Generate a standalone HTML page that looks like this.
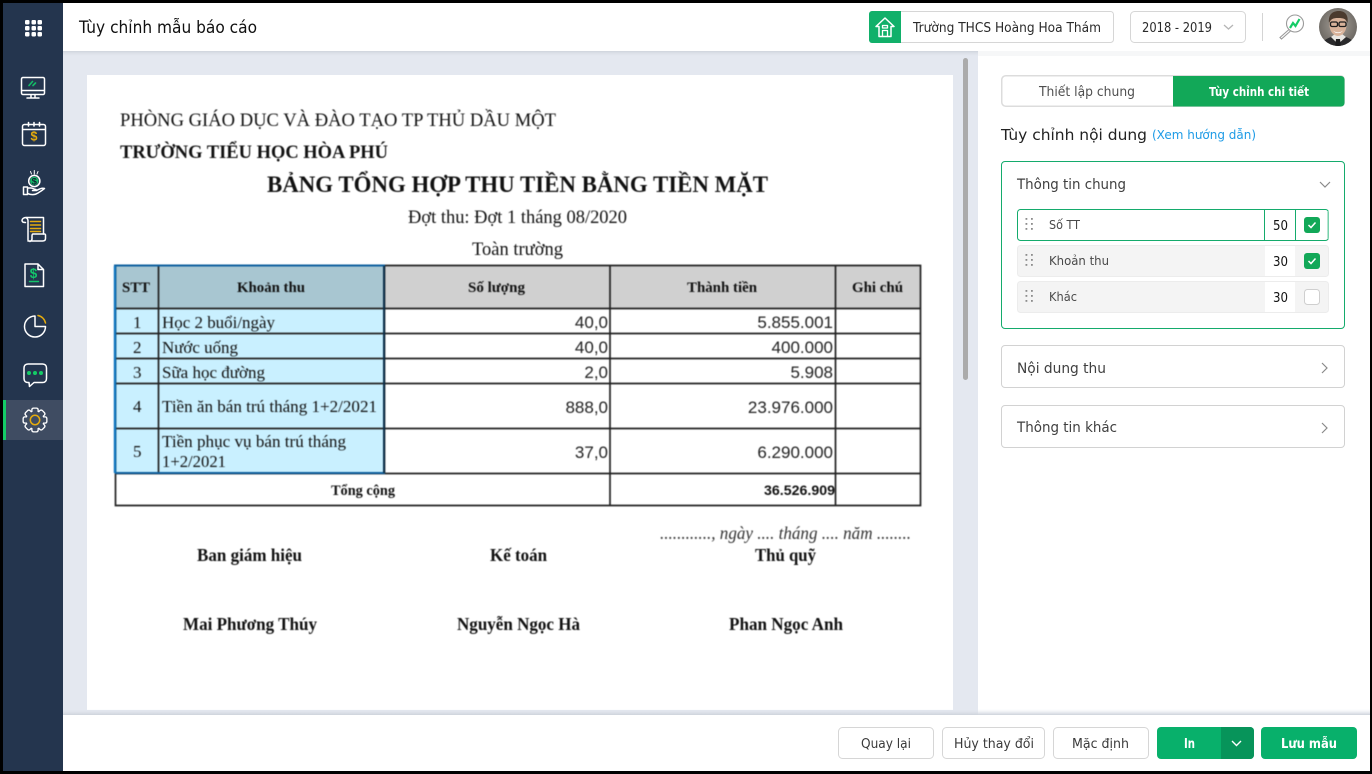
<!DOCTYPE html>
<html lang="vi"><head><meta charset="utf-8"><title>Tùy chỉnh mẫu báo cáo</title>
<style>
html,body{margin:0;padding:0;background:#000;width:1372px;height:774px;overflow:hidden}
svg{display:block}
text{white-space:pre}
.s{font-family:"DejaVu Sans","Liberation Sans",sans-serif}
.t{font-family:"Liberation Serif",serif;fill:#111}
.a{font-family:"Liberation Sans",sans-serif;fill:#222}
.b{font-weight:bold}
</style></head><body>
<svg width="1372" height="774" viewBox="0 0 1372 774" xmlns="http://www.w3.org/2000/svg">
<defs>
<linearGradient id="sh" x1="0" y1="0" x2="0" y2="1"><stop offset="0" stop-color="#cfd4dc"/><stop offset="1" stop-color="#e4e8f0" stop-opacity="0"/></linearGradient>
<linearGradient id="sf" x1="0" y1="1" x2="0" y2="0"><stop offset="0" stop-color="#cdd2da"/><stop offset="1" stop-color="#e4e8f0" stop-opacity="0"/></linearGradient>
<radialGradient id="av" cx=".5" cy=".45" r=".6"><stop offset="0" stop-color="#a8a29a"/><stop offset="1" stop-color="#66625d"/></radialGradient>
<clipPath id="ac"><circle cx="1338" cy="27" r="19"/></clipPath>
</defs>
<rect width="1372" height="774" fill="#000"/>
<rect x="63" y="51" width="915" height="664" fill="#e4e8f0"/>
<rect x="978" y="51" width="392" height="664" fill="#fff"/>
<rect x="63" y="3" width="1307" height="48" fill="#fff"/>
<rect x="63" y="51" width="915" height="6" fill="url(#sh)"/>
<rect x="978" y="51" width="392" height="5" fill="#f2f3f5" opacity=".7"/>
<rect x="87" y="75" width="866" height="635" fill="#fff"/>
<rect x="963" y="58" width="5" height="322" rx="2.5" fill="#ababab"/>

<!-- document -->
<g style="filter:blur(.45px)">
<text class="t" x="120" y="126" font-size="18.5" textLength="436" lengthAdjust="spacingAndGlyphs">PHÒNG GIÁO DỤC VÀ ĐÀO TẠO TP THỦ DẦU MỘT</text>
<text class="t b" x="120" y="158" font-size="18.5" textLength="268" lengthAdjust="spacingAndGlyphs">TRƯỜNG TIỂU HỌC HÒA PHÚ</text>
<text class="t b" x="267" y="192" font-size="23" textLength="501" lengthAdjust="spacingAndGlyphs">BẢNG TỔNG HỢP THU TIỀN BẰNG TIỀN MẶT</text>
<text class="t" x="408" y="223" font-size="18.5" textLength="219" lengthAdjust="spacingAndGlyphs">Đợt thu: Đợt 1 tháng 08/2020</text>
<text class="t" x="472" y="255" font-size="18.5" textLength="91" lengthAdjust="spacingAndGlyphs">Toàn trường</text>

<!-- table fills -->
<rect x="116" y="266" width="268" height="42" fill="#a8c6d1"/>
<rect x="384" y="266" width="536" height="42" fill="#d0d0d0"/>
<rect x="116" y="308" width="268" height="165" fill="#c9f0ff"/>
<g stroke="#222" stroke-width="1.7" fill="none">
<path d="M115.500 265.500H920.500V505.500H115.500Z"/>
<path d="M158.500 266V473M384.500 266V473M610 266V506M835.500 266V506"/>
<path d="M116 308.500H920M116 333.500H920M116 358.500H920M116 383.500H920M116 428.500H920M116 473.500H920" stroke-width="1.800"/>
</g>
<path d="M115 473V265.500H384V473H115" fill="none" stroke="#0d5f9e" stroke-width="2"/>
<path d="M384 266V473" stroke="#0b2f4a" stroke-width="2"/>
<path d="M115 266V473" stroke="#0d75c0" stroke-width="2.400"/>

<text class="t b" x="122" y="292" font-size="14.500" textLength="28" lengthAdjust="spacingAndGlyphs">STT</text>
<text class="t b" x="237" y="292" font-size="14.500" textLength="68" lengthAdjust="spacingAndGlyphs">Khoản thu</text>
<text class="t b" x="468" y="292" font-size="14.500" textLength="57" lengthAdjust="spacingAndGlyphs">Số lượng</text>
<text class="t b" x="687" y="292" font-size="14.500" textLength="70" lengthAdjust="spacingAndGlyphs">Thành tiền</text>
<text class="t b" x="852" y="292" font-size="14.500" textLength="51" lengthAdjust="spacingAndGlyphs">Ghi chú</text>
<text class="t" x="133" y="328" font-size="17">1</text>
<text class="t" x="133" y="353" font-size="17">2</text>
<text class="t" x="133" y="378" font-size="17">3</text>
<text class="t" x="133" y="412" font-size="17">4</text>
<text class="t" x="133" y="457" font-size="17">5</text>
<text class="t" x="162" y="328" font-size="17" textLength="113" lengthAdjust="spacingAndGlyphs">Học 2 buổi/ngày</text>
<text class="t" x="162" y="353" font-size="17" textLength="76" lengthAdjust="spacingAndGlyphs">Nước uống</text>
<text class="t" x="162" y="378" font-size="17" textLength="103" lengthAdjust="spacingAndGlyphs">Sữa học đường</text>
<text class="t" x="162" y="412" font-size="17" textLength="215" lengthAdjust="spacingAndGlyphs">Tiền ăn bán trú tháng 1+2/2021</text>
<text class="t" x="162" y="447" font-size="17" textLength="184" lengthAdjust="spacingAndGlyphs">Tiền phục vụ bán trú tháng</text>
<text class="t" x="162" y="467" font-size="17" textLength="64" lengthAdjust="spacingAndGlyphs">1+2/2021</text>
<text class="a" x="608" y="328" font-size="17" text-anchor="end">40,0</text>
<text class="a" x="608" y="353" font-size="17" text-anchor="end">40,0</text>
<text class="a" x="608" y="378" font-size="17" text-anchor="end">2,0</text>
<text class="a" x="608" y="413" font-size="17" text-anchor="end">888,0</text>
<text class="a" x="608" y="458" font-size="17" text-anchor="end">37,0</text>
<text class="a" x="833" y="328" font-size="17" text-anchor="end">5.855.001</text>
<text class="a" x="833" y="353" font-size="17" text-anchor="end">400.000</text>
<text class="a" x="833" y="378" font-size="17" text-anchor="end">5.908</text>
<text class="a" x="833" y="413" font-size="17" text-anchor="end">23.976.000</text>
<text class="a" x="833" y="458" font-size="17" text-anchor="end">6.290.000</text>
<text class="t b" x="331" y="495" font-size="14.500" textLength="64" lengthAdjust="spacingAndGlyphs">Tổng cộng</text>
<text class="a b" x="764" y="495" font-size="14" textLength="71" lengthAdjust="spacingAndGlyphs" style="fill:#111">36.526.909</text>

<text class="t" x="660" y="539" font-size="17.500" font-style="italic" textLength="251" lengthAdjust="spacingAndGlyphs" style="fill:#333">............, ngày .... tháng .... năm ........</text>
<text class="t b" x="197" y="561" font-size="18" textLength="105" lengthAdjust="spacingAndGlyphs">Ban giám hiệu</text>
<text class="t b" x="490" y="561" font-size="18" textLength="57" lengthAdjust="spacingAndGlyphs">Kế toán</text>
<text class="t b" x="755" y="561" font-size="18" textLength="61" lengthAdjust="spacingAndGlyphs">Thủ quỹ</text>
<text class="t b" x="183" y="630" font-size="18" textLength="134" lengthAdjust="spacingAndGlyphs">Mai Phương Thúy</text>
<text class="t b" x="457" y="630" font-size="18" textLength="123" lengthAdjust="spacingAndGlyphs">Nguyễn Ngọc Hà</text>
<text class="t b" x="729" y="630" font-size="18" textLength="114" lengthAdjust="spacingAndGlyphs">Phan Ngọc Anh</text>
</g>

<!-- sidebar -->
<rect x="3" y="3" width="60" height="768" fill="#24354e"/>
<rect x="3" y="400" width="60" height="40" fill="#3f4c62"/>
<rect x="3" y="400" width="3" height="40" fill="#14cc66"/>
<g fill="#fff">
<rect x="25" y="20" width="4.500" height="4.500" rx="1.200"/><rect x="31.500" y="20" width="4.500" height="4.500" rx="1.200"/><rect x="37.500" y="20" width="4.500" height="4.500" rx="1.200"/>
<rect x="25" y="26" width="4.500" height="4.500" rx="1.200"/><rect x="31.500" y="26" width="4.500" height="4.500" rx="1.200"/><rect x="37.500" y="26" width="4.500" height="4.500" rx="1.200"/>
<rect x="25" y="32" width="4.500" height="4.500" rx="1.200"/><rect x="31.500" y="32" width="4.500" height="4.500" rx="1.200"/><rect x="37.500" y="32" width="4.500" height="4.500" rx="1.200"/>
</g>
<g fill="none" stroke="#fff" stroke-width="1.500" stroke-linecap="round" stroke-linejoin="round">
<!-- monitor -->
<rect x="21.500" y="77.500" width="23" height="17" rx="1.500"/>
<path d="M22 90.500H44M31 95V97.500M35 95V97.500M27 98H39"/>
<path d="M29 85.500L32.500 81.500M33 85.500L35.500 83" stroke="#14b866" stroke-width="1.700"/>
<!-- calendar -->
<rect x="22.500" y="124.500" width="23" height="21" rx="2"/>
<path d="M23 129.500H45"/>
<path d="M28.500 122.500V126M34 122.500V126M39.500 122.500V126" stroke-width="1.600"/>
<!-- hand -->
<circle cx="34.300" cy="181" r="5.600"/>
<path d="M34.300 170.500V174M30.500 171.500L31.500 174M38 171.500L37 174" stroke-width="1"/>
<path d="M23.500 187H27.500V194.500H23.500ZM27.500 188H31C33 188 34 189.500 36 189.500M27.500 193.500C31 195 35 195 38 193C40 191.500 43 190 44.500 188.500C42 187.500 39 189 36.500 190.500H32.500"/>
<!-- scroll -->
<path d="M26 217.500H43.500V234M26 217.500C23.500 217.500 22 219 22 220.500C22 222 23 222.500 25.500 222.500M26 217.500C27.500 218.500 28 219.500 28 221V240"/>
<path d="M28 241H42.500C44.500 241 45.500 240 45.500 238.500V235C45.500 234.500 45 234 44.500 234H33C32 234 32 235 32 236V239C32 240.500 31 241 30 241.500"/>
<path d="M30.500 221.500H40.500M30.500 225H40.500M30.500 228.500H40.500M30.500 231.500H40.500" stroke="#e4ab0e" stroke-width="1.500"/>
<!-- doc -->
<path d="M25 264H38L43.500 269.500V286.500H25ZM38 264V269.500H43.500" stroke-width="1.500"/>
<path d="M29.500 281.500H38.500" stroke="#14c46a" stroke-width="1.400"/>
<!-- pie -->
<path d="M35 316A10.500 10.500 0 1 0 45.500 326.500H35Z"/>
<path d="M38 315.500A9.500 9.500 0 0 1 45.500 323" stroke="#e4ab0e" stroke-width="1.500"/>
<!-- chat -->
<path d="M28 364H42.500C45 364 46.500 365.500 46.500 368V378.500C46.500 381 45 382.500 42.500 382.500H34L29.500 386.500L29 382.500H28C25.500 382.500 24 381 24 378.500V368C24 365.500 25.500 364 28 364Z" stroke-width="1.500"/>
</g>
<text class="a b" x="34" y="140.500" font-size="12.500" text-anchor="middle" style="fill:#e4ab0e">$</text>
<circle cx="34.300" cy="181" r="4.200" fill="#14b866"/>
<text class="a b" x="34.300" y="184.500" font-size="9.500" text-anchor="middle" style="fill:#123">$</text>
<text class="a b" x="33.500" y="278" font-size="13.500" text-anchor="middle" style="fill:#14c46a">$</text>
<g fill="#14cc66"><circle cx="29" cy="373" r="2"/><circle cx="35" cy="373" r="2"/><circle cx="41" cy="373" r="2"/></g>
<!-- gear -->
<g transform="translate(35 420)">
<g fill="#fff"><circle r="9.800"/>
<rect x="-3.800" y="-12.500" width="7.600" height="25" rx="2.200"/>
<rect x="-3.800" y="-12.500" width="7.600" height="25" rx="2.200" transform="rotate(45)"/>
<rect x="-3.800" y="-12.500" width="7.600" height="25" rx="2.200" transform="rotate(90)"/>
<rect x="-3.800" y="-12.500" width="7.600" height="25" rx="2.200" transform="rotate(135)"/></g>
<g fill="#3f4c62"><circle r="8.500"/>
<rect x="-2.500" y="-11.200" width="5" height="22.400" rx="1.200"/>
<rect x="-2.500" y="-11.200" width="5" height="22.400" rx="1.200" transform="rotate(45)"/>
<rect x="-2.500" y="-11.200" width="5" height="22.400" rx="1.200" transform="rotate(90)"/>
<rect x="-2.500" y="-11.200" width="5" height="22.400" rx="1.200" transform="rotate(135)"/></g>
<circle r="4.700" fill="none" stroke="#e4ab0e" stroke-width="1.500"/>
</g>

<!-- header -->
<text class="s" x="79" y="33" font-size="16.500" fill="#111" textLength="178" lengthAdjust="spacingAndGlyphs">Tùy chỉnh mẫu báo cáo</text>
<rect x="869.500" y="11.500" width="244" height="31" rx="3" fill="#fff" stroke="#d6d6d6"/>
<path d="M872 11H901V43H872A3 3 0 0 1 869 40V14A3 3 0 0 1 872 11Z" fill="#11b06a"/>
<g fill="none" stroke="#fff" stroke-width="1.500" stroke-linejoin="round" stroke-linecap="round">
<path d="M876 26.500L885 18L894 26.500H891V36.500H879V26.500Z"/>
<path d="M882.500 36.500V30.500H887.500V36.500M882.500 25.500H887.500V28H882.500Z" stroke-width="1.300"/>
</g>
<text class="s" x="913" y="32" font-size="13.500" fill="#2a2a2a" textLength="188" lengthAdjust="spacingAndGlyphs">Trường THCS Hoàng Hoa Thám</text>
<rect x="1130.500" y="11.500" width="115" height="31" rx="4" fill="#fff" stroke="#d6d6d6"/>
<text class="s" x="1142" y="32" font-size="13" fill="#2a2a2a" textLength="70" lengthAdjust="spacingAndGlyphs">2018 - 2019</text>
<path d="M1224 25L1228.500 29L1233 25" fill="none" stroke="#b5b5b5" stroke-width="1.300"/>
<rect x="1262" y="13" width="1" height="28" fill="#d4d4d4"/>
<g fill="none" stroke="#9a9a9a" stroke-width="1.100">
<circle cx="1295" cy="23.500" r="8.500"/>
<path d="M1289 29.500L1280 37.500L1281.500 39L1290.500 31"/>
<path d="M1290 28L1293 23L1295.500 26L1299.500 19" stroke="#14cc66" stroke-width="2.200"/>
</g>
<!-- avatar -->
<circle cx="1338" cy="27" r="19" fill="url(#av)"/>
<g clip-path="url(#ac)">
<path d="M1319 48C1322 40 1328 38 1334 36H1343C1349 38 1354 40 1357 48Z" fill="#2a2a2c"/>
<path d="M1331 37L1338 44L1346 37L1342 34H1335Z" fill="#e8e6e2"/>
<path d="M1336 39H1340L1341 47H1335Z" fill="#1d1d1f"/>
<ellipse cx="1338" cy="25" rx="8.500" ry="11" fill="#d8b29a"/>
<path d="M1329 23C1328 14 1333 11 1339 11C1346 11 1348.500 16 1347.500 23C1346 19 1344 18 1338 18C1333 18 1331 19 1329 23Z" fill="#4a3a2e"/>
<rect x="1330.500" y="22" width="7" height="4.500" rx="1.500" fill="none" stroke="#1c1c1c" stroke-width="1.300"/>
<rect x="1339" y="22" width="7" height="4.500" rx="1.500" fill="none" stroke="#1c1c1c" stroke-width="1.300"/>
<path d="M1333 30.500C1336 33 1340 33 1343 30.500C1341 34 1335 34 1333 30.500Z" fill="#fff"/>
</g>

<!-- right panel -->
<rect x="1001.750" y="75.750" width="342.500" height="30.500" rx="4" fill="#fff" stroke="#dcdcdc" stroke-width="1.500"/>
<path d="M1173 76H1341A3.500 3.500 0 0 1 1344.500 79.500V103A3.500 3.500 0 0 1 1341 106.500H1173Z" fill="#12a858"/>
<text class="s" x="1039" y="96" font-size="13" fill="#4f4f4f" textLength="96" lengthAdjust="spacingAndGlyphs">Thiết lập chung</text>
<text class="s b" x="1209" y="96" font-size="12.500" fill="#fff" textLength="100" lengthAdjust="spacingAndGlyphs">Tùy chỉnh chi tiết</text>
<text class="s" x="1001" y="140" font-size="15.500" fill="#222" textLength="146" lengthAdjust="spacingAndGlyphs">Tùy chỉnh nội dung</text>
<text class="s" x="1152" y="139" font-size="12.500" fill="#1e9be6" textLength="104" lengthAdjust="spacingAndGlyphs">(Xem hướng dẫn)</text>

<rect x="1001.500" y="161.500" width="343" height="167" rx="3.500" fill="#fff" stroke="#14ab6c"/>
<text class="s" x="1017" y="189" font-size="14.500" fill="#3f3f3f" textLength="109" lengthAdjust="spacingAndGlyphs">Thông tin chung</text>
<path d="M1320 182L1325 187L1330 182" fill="none" stroke="#8a8a8a" stroke-width="1.200"/>

<rect x="1017.500" y="209.500" width="311" height="31" rx="3" fill="#fff" stroke="#14ab6c"/>
<path d="M1264.500 210V240M1295.500 210V240" stroke="#14ab6c"/>
<path d="M1328 211V239" stroke="#9adcc0" stroke-width="1.500"/>
<rect x="1017.500" y="245.500" width="311" height="31" rx="3" fill="#f4f4f4" stroke="#ececec"/>
<rect x="1265" y="246" width="30" height="30" fill="#fff"/>
<rect x="1017.500" y="281.500" width="311" height="31" rx="3" fill="#f4f4f4" stroke="#ececec"/>
<rect x="1265" y="282" width="30" height="30" fill="#fff"/>
<g fill="#8c8c8c">
<rect x="1025.500" y="218" width="1.800" height="1.800"/><rect x="1031" y="218" width="1.800" height="1.800"/><rect x="1025.500" y="223" width="1.800" height="1.800"/><rect x="1031" y="223" width="1.800" height="1.800"/><rect x="1025.500" y="228" width="1.800" height="1.800"/><rect x="1031" y="228" width="1.800" height="1.800"/>
<rect x="1025.500" y="254" width="1.800" height="1.800"/><rect x="1031" y="254" width="1.800" height="1.800"/><rect x="1025.500" y="259" width="1.800" height="1.800"/><rect x="1031" y="259" width="1.800" height="1.800"/><rect x="1025.500" y="264" width="1.800" height="1.800"/><rect x="1031" y="264" width="1.800" height="1.800"/>
<rect x="1025.500" y="290" width="1.800" height="1.800"/><rect x="1031" y="290" width="1.800" height="1.800"/><rect x="1025.500" y="295" width="1.800" height="1.800"/><rect x="1031" y="295" width="1.800" height="1.800"/><rect x="1025.500" y="300" width="1.800" height="1.800"/><rect x="1031" y="300" width="1.800" height="1.800"/>
</g>
<text class="s" x="1049" y="229" font-size="12" fill="#4a4a4a" textLength="31" lengthAdjust="spacingAndGlyphs">Số TT</text>
<text class="s" x="1049" y="265" font-size="12" fill="#4a4a4a" textLength="60" lengthAdjust="spacingAndGlyphs">Khoản thu</text>
<text class="s" x="1049" y="301" font-size="12" fill="#4a4a4a" textLength="28" lengthAdjust="spacingAndGlyphs">Khác</text>
<text class="s" x="1273" y="230" font-size="13" fill="#111" textLength="15" lengthAdjust="spacingAndGlyphs">50</text>
<text class="s" x="1273" y="266" font-size="13" fill="#111" textLength="15" lengthAdjust="spacingAndGlyphs">30</text>
<text class="s" x="1273" y="302" font-size="13" fill="#111" textLength="15" lengthAdjust="spacingAndGlyphs">30</text>
<rect x="1304" y="217" width="16" height="16" rx="3" fill="#12a858"/>
<path d="M1308.500 225L1311 227.500L1315.500 222.500" fill="none" stroke="#fff" stroke-width="1.500"/>
<rect x="1304" y="253" width="16" height="16" rx="3" fill="#12a858"/>
<path d="M1308.500 261L1311 263.500L1315.500 258.500" fill="none" stroke="#fff" stroke-width="1.500"/>
<rect x="1304.500" y="289.500" width="15" height="15" rx="3" fill="#fff" stroke="#cfcfcf"/>

<rect x="1001.500" y="345.500" width="343" height="42" rx="3.500" fill="#fff" stroke="#d2d2d2"/>
<text class="s" x="1017" y="373" font-size="14.500" fill="#3f3f3f" textLength="89" lengthAdjust="spacingAndGlyphs">Nội dung thu</text>
<path d="M1322 363L1327 368L1322 373" fill="none" stroke="#8a8a8a" stroke-width="1.200"/>
<rect x="1001.500" y="405.500" width="343" height="42" rx="3.500" fill="#fff" stroke="#d2d2d2"/>
<text class="s" x="1017" y="432" font-size="14.500" fill="#3f3f3f" textLength="100" lengthAdjust="spacingAndGlyphs">Thông tin khác</text>
<path d="M1322 423L1327 428L1322 433" fill="none" stroke="#8a8a8a" stroke-width="1.200"/>

<!-- footer -->
<rect x="63" y="709" width="1307" height="6" fill="url(#sf)"/>
<rect x="63" y="715" width="1307" height="56" fill="#fff"/>
<rect x="838.500" y="727.500" width="95" height="31" rx="4" fill="#fff" stroke="#d6d6d6"/>
<rect x="942.500" y="727.500" width="102" height="31" rx="4" fill="#fff" stroke="#d6d6d6"/>
<rect x="1053.500" y="727.500" width="95" height="31" rx="4" fill="#fff" stroke="#d6d6d6"/>
<text class="s" x="861" y="748" font-size="13.500" fill="#3a3a3a" textLength="50" lengthAdjust="spacingAndGlyphs">Quay lại</text>
<text class="s" x="954" y="748" font-size="13.500" fill="#3a3a3a" textLength="80" lengthAdjust="spacingAndGlyphs">Hủy thay đổi</text>
<text class="s" x="1072" y="748" font-size="13.500" fill="#3a3a3a" textLength="57" lengthAdjust="spacingAndGlyphs">Mặc định</text>
<rect x="1157" y="727" width="97" height="32" rx="4" fill="#08b06b"/>
<path d="M1221 727H1250A4 4 0 0 1 1254 731V755A4 4 0 0 1 1250 759H1221Z" fill="#07945a"/>
<path d="M1232 741L1236.500 745.500L1241 741" fill="none" stroke="#fff" stroke-width="1.400"/>
<text class="s b" x="1184" y="748" font-size="13" fill="#fff" textLength="11" lengthAdjust="spacingAndGlyphs">In</text>
<rect x="1261" y="727" width="96" height="32" rx="4" fill="#08b06b"/>
<text class="s b" x="1281" y="748" font-size="13" fill="#fff" textLength="56" lengthAdjust="spacingAndGlyphs">Lưu mẫu</text>
</svg>
</body></html>
